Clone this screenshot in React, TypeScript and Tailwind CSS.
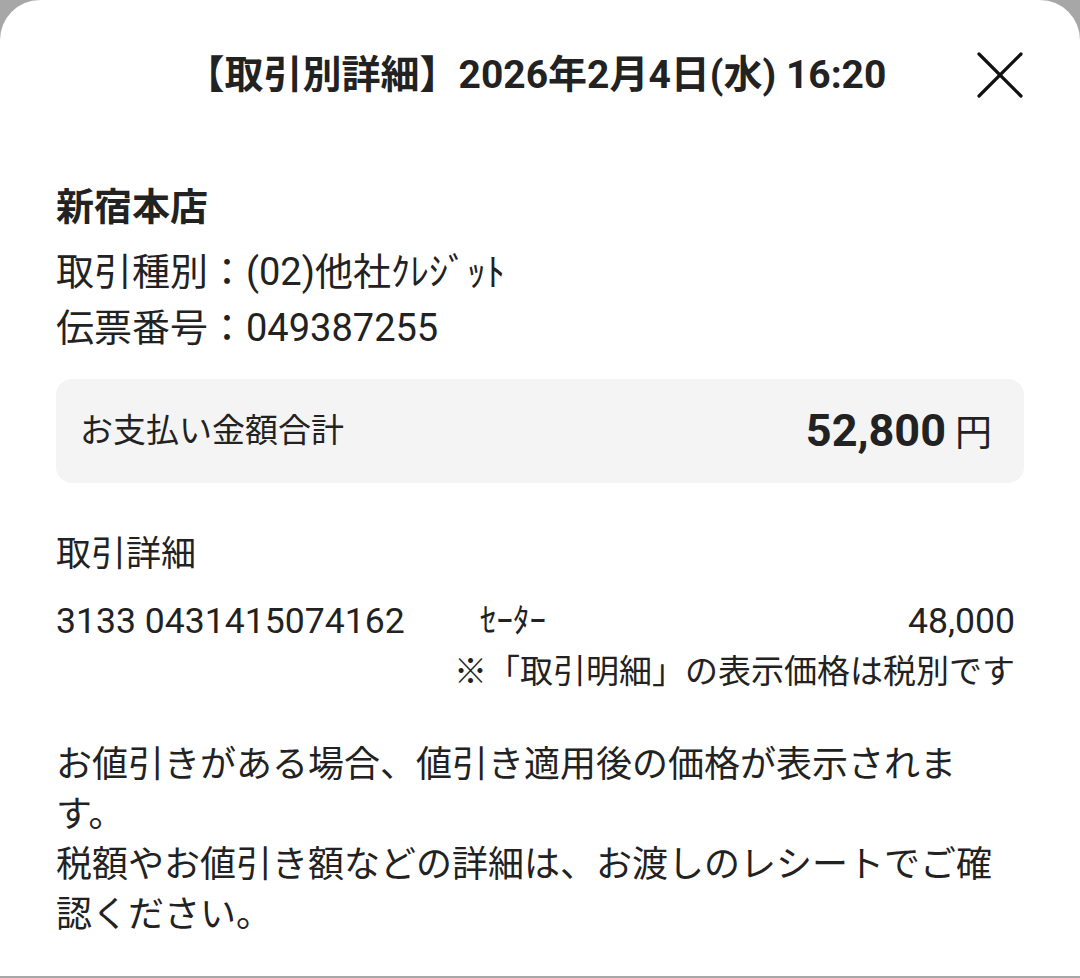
import React from 'react';

const font = "font-['Roboto','Noto_Sans_CJK_JP',sans-serif]";

const CloseIcon = () => (
  <svg width="46" height="46" viewBox="0 0 46 46" fill="none" stroke="#111" strokeWidth="3.2" strokeLinecap="round">
    <path d="M2 2 L44 44" />
    <path d="M44 2 L2 44" />
  </svg>
);

const App = () => {
  return (
    <div lang="ja" className={`${font} w-[1080px] h-[978px] bg-[#a7a7a7] text-[#222]`}>
      <div className="h-[976px] bg-white rounded-t-[40px] px-[56px] pt-[51px] overflow-hidden">
        {/* header */}
        <div className="grid grid-cols-[1fr_auto_1fr] items-center -mx-[56px]">
          <div />
          <h1 className="text-[39px] leading-[48px] font-bold mr-[8px] whitespace-nowrap">
            【取引別詳細】2026年2月4日(水) 16:20
          </h1>
          <div className="flex justify-end pr-[57px]">
            <CloseIcon />
          </div>
        </div>

        {/* store info */}
        <div className="mt-[82px] text-[38px] leading-[52px] font-bold">新宿本店</div>
        <div className="mt-[11px] text-[38px] leading-[56px]">
          <div>取引種別：(02)他社ｸﾚｼﾞｯﾄ</div>
          <div>伝票番号：049387255</div>
        </div>

        {/* total */}
        <div className="mt-[23px] h-[104px] rounded-[16px] bg-[#f4f4f4] flex items-center justify-between pl-[24px] pr-[32px]">
          <span className="text-[33px]">お支払い金額合計</span>
          <span className="flex items-baseline gap-[9px]">
            <span className="text-[45px] font-bold">52,800</span>
            <span className="text-[37px]">円</span>
          </span>
        </div>

        {/* details */}
        <div className="mt-[48px] text-[35px] leading-[48px]">取引詳細</div>
        <div className="mt-[18px] flex items-center text-[35.6px] leading-[48px] pr-[9px]">
          <span className="w-[424px]">3133 0431415074162</span>
          <span className="text-[33px]">ｾｰﾀｰ</span>
          <span className="ml-auto">48,000</span>
        </div>
        <div className="mt-[5px] text-right text-[33px] leading-[44px] pr-[9px]">
          ※「取引明細」の表示価格は税別です
        </div>

        {/* notes */}
        <p className="mt-[46px] text-[36px] leading-[50px] pr-[4px]">
          お値引きがある場合、値引き適用後の価格が表示されます。
          <br />
          税額やお値引き額などの詳細は、お渡しのレシートでご確認ください。
        </p>
      </div>
    </div>
  );
};

export default App;
